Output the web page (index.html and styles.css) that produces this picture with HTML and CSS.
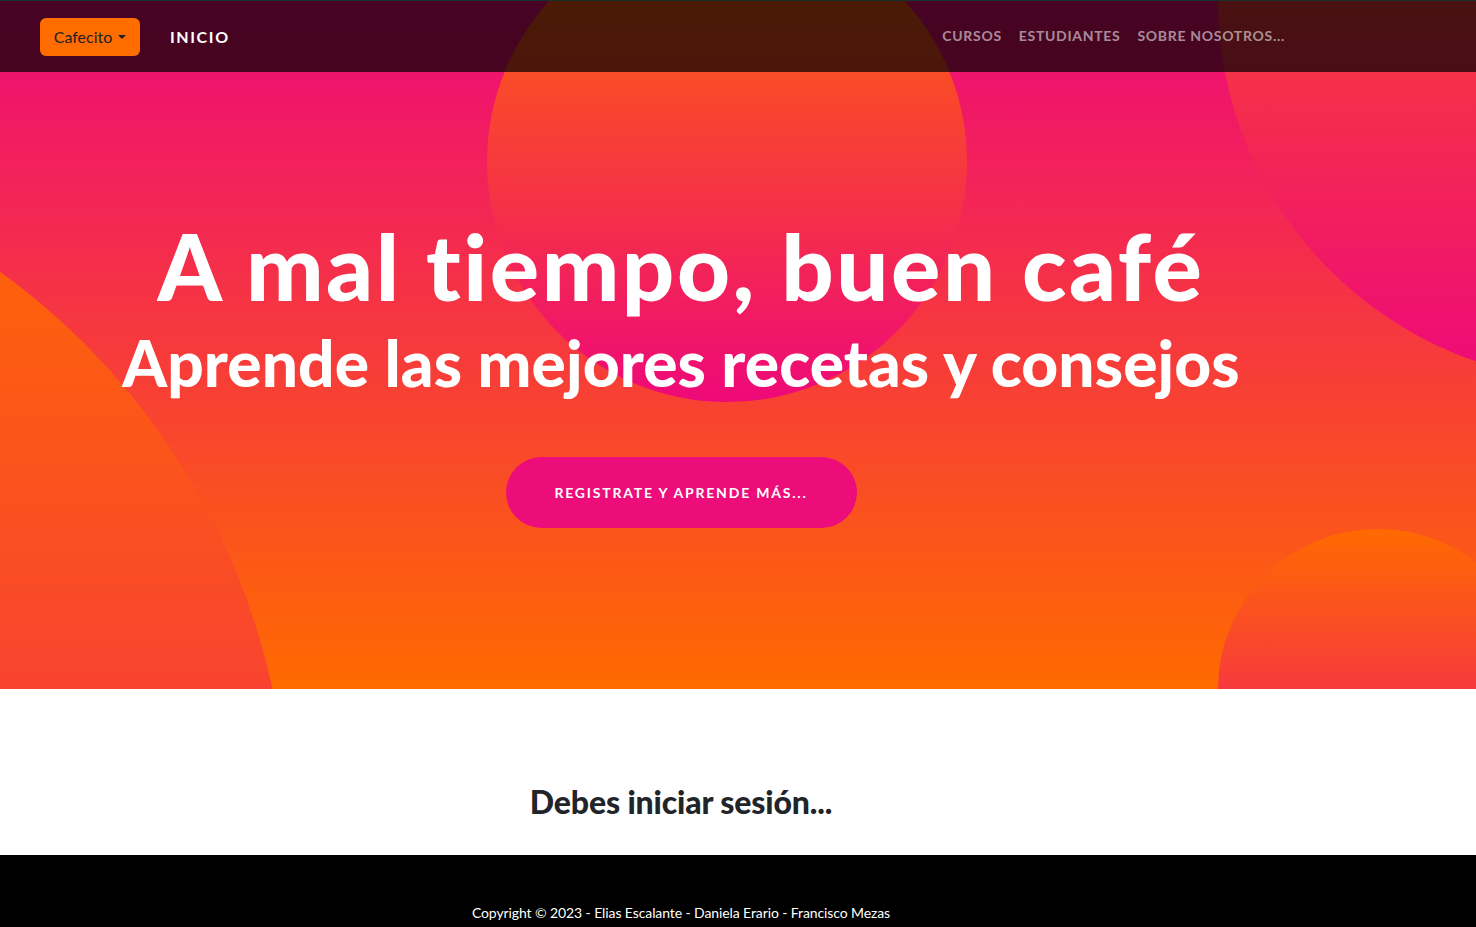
FILE: index.html
```html
<!DOCTYPE html>
<html lang="es">
<head>
<meta charset="utf-8">
<title>Cafecito</title>
<link rel="stylesheet" href="styles.css">
</head>
<body>
<header class="navbar">
  <div class="nav-left">
    <button class="brand-btn">Cafecito <span class="caret"></span></button>
    <a class="nav-home" href="#">INICIO</a>
  </div>
  <nav class="nav-right">
    <a href="#">CURSOS</a>
    <a href="#">ESTUDIANTES</a>
    <a href="#">SOBRE NOSOTROS...</a>
  </nav>
</header>

<section class="hero">
  <span class="bubble bubble-top"></span>
  <span class="bubble bubble-right"></span>
  <span class="bubble bubble-left"></span>
  <span class="bubble bubble-bottom"></span>
  <div class="hero-inner">
    <h1 class="hero-title">A mal tiempo, buen café</h1>
    <h2 class="hero-sub">Aprende las mejores recetas y consejos</h2>
    <a class="cta" href="#">REGISTRATE Y APRENDE MÁS...</a>
  </div>
</section>

<section class="notice">
  <h3 class="notice-text">Debes iniciar sesión...</h3>
</section>

<footer class="footer">
  <p>Copyright © 2023 - Elias Escalante - Daniela Erario - Francisco Mezas</p>
</footer>
</body>
</html>
```

FILE: styles.css
```css
* { box-sizing: border-box; }
html, body { margin: 0; padding: 0; }
body {
  font-family: "Lato", "Open Sans", sans-serif;
  background: #fff;
  overflow: hidden;
  font-variant-ligatures: none;
}

.navbar {
  position: absolute;
  top: 0; left: 0; right: 0;
  height: 72px;
  z-index: 10;
  background: rgba(0, 0, 0, 0.7);
  border-top: 1px solid #16302a;
  display: flex;
  align-items: center;
  justify-content: space-between;
  padding: 0 191px 0 40px;
}
.nav-left { display: flex; align-items: center; gap: 30px; }
.brand-btn {
  width: 100px; height: 38px;
  background: #ff6d00;
  border: none;
  border-radius: 6px;
  color: #212121;
  font-family: "Lato", sans-serif;
  font-size: 16px;
  display: flex; align-items: center; justify-content: center; gap: 6px;
  padding: 0;
}
.caret {
  width: 0; height: 0;
  border-left: 4px solid transparent;
  border-right: 4px solid transparent;
  border-top: 4px solid #212121;
  margin-top: 1px;
}
.nav-home {
  color: #fff;
  font-weight: 700;
  font-size: 16px;
  letter-spacing: 1.6px;
  text-decoration: none;
}
.nav-right { display: flex; gap: 17px; margin-top: -2px; }
.nav-right a {
  color: rgba(255, 255, 255, 0.55);
  font-weight: 700;
  font-size: 14px;
  letter-spacing: 0.7px;
  text-decoration: none;
}

.hero {
  position: relative;
  height: 689px;
  overflow: hidden;
  background: linear-gradient(#ee0979, #ff6a00);
}
.bubble {
  position: absolute;
  border-radius: 50%;
  background: linear-gradient(#ff6a00, #ee0979);
}
.bubble-top { left: 487px; top: -78px; width: 480px; height: 480px; }
.bubble-right { left: 1218px; top: -382px; width: 764px; height: 764px; }
.bubble-left { left: -1102px; top: 140px; width: 1390px; height: 1390px; }
.bubble-bottom { left: 1218px; top: 529px; width: 320px; height: 320px; }

.hero-inner {
  position: relative;
  display: flex;
  flex-direction: column;
  align-items: center;
  padding: 211px 114px 0 0;
  color: #fff;
}
.hero-title {
  margin: 0;
  font-size: 92px;
  font-weight: 900;
  line-height: 1.2;
  letter-spacing: 2.55px;
  white-space: nowrap;
}
.hero-sub {
  margin: 4px 0 0;
  font-size: 64px;
  font-weight: 900;
  line-height: 1.2;
  letter-spacing: 0.1px;
  white-space: nowrap;
}
.cta {
  margin-top: 55px;
  width: 351px; height: 71px;
  border-radius: 36px;
  background: #ec0c7a;
  color: #fff;
  font-weight: 700;
  font-size: 14px;
  letter-spacing: 1.8px;
  text-decoration: none;
  display: flex; align-items: center; justify-content: center;
}

.notice {
  height: 166px;
  padding: 94px 114px 0 0;
  text-align: center;
}
.notice-text {
  margin: 0;
  font-size: 32px;
  font-weight: 900;
  line-height: 1.2;
  letter-spacing: -0.15px;
  color: #212529;
}

.footer {
  height: 72px;
  background: #000;
  padding: 50px 114px 0 0;
  text-align: center;
}
.footer p {
  margin: 0;
  color: #fff;
  font-size: 14px;
  line-height: 1.2;
  letter-spacing: -0.1px;
}
```
